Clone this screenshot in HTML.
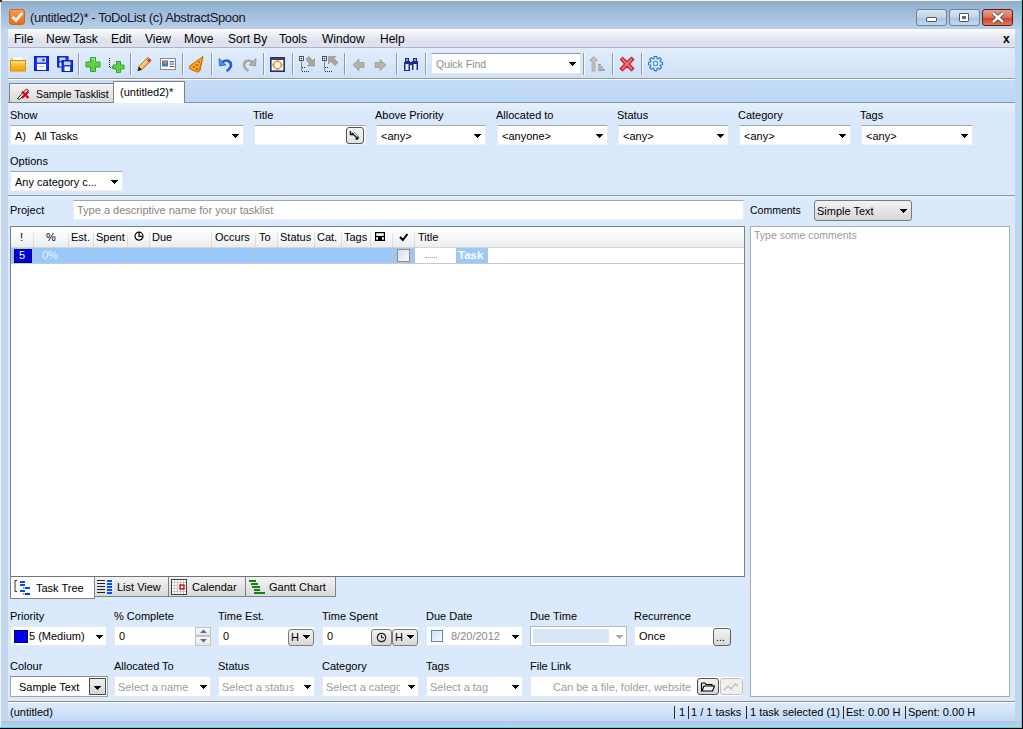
<!DOCTYPE html>
<html><head><meta charset="utf-8">
<style>
*{box-sizing:border-box;margin:0;padding:0}
html,body{width:1023px;height:729px;overflow:hidden;background:#fff}
body{font-family:"Liberation Sans",sans-serif;font-size:11px;color:#000;position:relative}
.a{position:absolute}
.t{position:absolute;white-space:nowrap;line-height:13px}
.combo{position:absolute;background:#fff;border:1px solid #e6ebf1;border-top-color:#a2a6ad;border-bottom-color:#edf2f8;height:20px}
.arr{position:absolute;width:7px;height:4px;background:linear-gradient(var(--c),var(--c)) 0 0/7px 1px no-repeat,linear-gradient(var(--c),var(--c)) 1px 1px/5px 1px no-repeat,linear-gradient(var(--c),var(--c)) 2px 2px/3px 1px no-repeat,linear-gradient(var(--c),var(--c)) 3px 3px/1px 1px no-repeat;--c:#000}
.combo .arr{right:4px;top:8px}
.lbl{position:absolute;white-space:nowrap;line-height:13px;color:#000}
.hd{position:absolute;top:231px;white-space:nowrap;line-height:13px}
.vs{position:absolute;width:1px;background:linear-gradient(#fff,#e2e2e2 40%,#d8d8d8)}
.rs{position:absolute;width:1px;background:#c2c2c2;top:248px;height:15px}
.tsep{position:absolute;top:53px;width:2px;height:22px;border-left:1px solid #8d9bb0;border-right:1px solid #f4f8fc}
.btn{position:absolute;border:1px solid #7a7a7a;border-radius:3px;background:linear-gradient(#f3f3f3,#e5e5e5 50%,#d6d6d6)}
.ssep{position:absolute;top:706px;width:1px;height:13px;background:#2a2a2a}
</style></head><body>
<!-- window frame -->
<div class="a" style="left:0;top:0;width:1023px;height:729px;background:#c3d6ee"></div>
<div class="a" style="left:0;top:0;width:1px;height:729px;background:#eef3f9"></div>
<div class="a" style="left:0;top:0;width:1023px;height:1px;background:#eef3f9"></div>
<div class="a" style="left:1px;top:1px;width:1020px;height:28px;background:linear-gradient(#8fa7c6,#94b2c6 3px,#98b6d6 7px,#a6c1de 15px,#b6cee9 27px)"></div>
<div class="a" style="left:0;top:0;width:2px;height:2px;background:#2a3040"></div>
<div class="a" style="left:1021px;top:0;width:1px;height:728px;background:#3fd8f8"></div>
<div class="a" style="left:1022px;top:0;width:1px;height:729px;background:#000"></div>
<div class="a" style="left:0;top:727px;width:1022px;height:1px;background:#3fd8f8"></div>
<div class="a" style="left:0;top:728px;width:1023px;height:1px;background:#000"></div>
<!-- title -->
<div class="a" style="left:9px;top:9px;width:16px;height:16px;background:linear-gradient(#fa9a50,#ea6a18);border-radius:3px;border:1px solid #d0651c"></div>
<svg class="a" style="left:9px;top:9px" width="16" height="16"><path d="M3.5 8 L7 11.5 L13 4" stroke="#fff" stroke-width="2.6" fill="none"/></svg>
<div class="t" style="left:30px;top:11px;font-size:13px;letter-spacing:-0.4px;color:#15152a">(untitled2)* - ToDoList (c) AbstractSpoon</div>
<!-- window buttons -->
<div class="a" style="left:916px;top:9px;width:31px;height:17px;border:1px solid #6f7f94;border-radius:3px;background:linear-gradient(#d8e5f3,#c0d3ea 50%,#aac1dd 51%,#c6d9ee)"></div>
<div class="a" style="left:926px;top:17px;width:11px;height:5px;background:#fff;border:1px solid #505a68;border-radius:1px"></div>
<div class="a" style="left:949px;top:9px;width:31px;height:17px;border:1px solid #6f7f94;border-radius:3px;background:linear-gradient(#d8e5f3,#c0d3ea 50%,#aac1dd 51%,#c6d9ee)"></div>
<div class="a" style="left:959px;top:13px;width:10px;height:9px;background:#fff;border:1px solid #505a68;border-radius:1px"></div>
<div class="a" style="left:962px;top:16px;width:4px;height:3px;background:#5a6a80"></div>
<div class="a" style="left:982px;top:9px;width:31px;height:17px;border:1px solid #5a2020;border-radius:3px;background:linear-gradient(#e8a08a,#d97058 50%,#c8402a 51%,#e07a5a)"></div>
<svg class="a" style="left:990px;top:11px" width="16" height="13"><path d="M3 2 L13 11 M13 2 L3 11" stroke="#4a3a3a" stroke-width="4"/><path d="M3 2 L13 11 M13 2 L3 11" stroke="#fff" stroke-width="2.4"/></svg>

<!-- client bg -->
<div class="a" style="left:8px;top:29px;width:1007px;height:692px;background:#d9e7f8"></div><div class="a" style="left:1px;top:721px;width:1020px;height:6px;background:linear-gradient(#c4c8ea,#a9c9e7 20%,#bfc9e8 40%,#a9d3dc 60%,#c6c9ec 80%,#b0dcf0)"></div>
<!-- menu -->
<div class="a" style="left:8px;top:29px;width:1007px;height:19px;background:linear-gradient(#fefefe,#f3f3f7 4px,#e8eaf3 8px,#dde1ee 12px,#dfe2f0);border-bottom:1px solid #aeb3c3"></div>
<div class="t" style="left:14px;top:33px;font-size:12px">File</div>
<div class="t" style="left:46px;top:33px;font-size:12px">New Task</div>
<div class="t" style="left:111px;top:33px;font-size:12px">Edit</div>
<div class="t" style="left:145px;top:33px;font-size:12px">View</div>
<div class="t" style="left:184px;top:33px;font-size:12px">Move</div>
<div class="t" style="left:228px;top:33px;font-size:12px">Sort By</div>
<div class="t" style="left:279px;top:33px;font-size:12px">Tools</div>
<div class="t" style="left:322px;top:33px;font-size:12px">Window</div>
<div class="t" style="left:380px;top:33px;font-size:12px">Help</div>
<div class="t" style="left:1003px;top:33px;font-size:12px;font-weight:bold">x</div>

<!-- toolbar -->
<div class="a" style="left:8px;top:48px;width:1007px;height:32px;background:linear-gradient(#e2edfb,#d6e6f9 60%,#cfe1f7 97%);border-bottom:1px solid #fff"></div><div class="a" style="left:8px;top:78px;width:1007px;height:1px;background:#8f9aa8"></div>
<svg class="a" style="left:10px;top:56px" width="16" height="16"><defs><linearGradient id="gf" x1="0" y1="0" x2="0" y2="1"><stop offset="0" stop-color="#ffd35a"/><stop offset="1" stop-color="#f0a010"/></linearGradient></defs><path d="M1 2.5 H6 L7 4 H14 V15 H1 Z" fill="#f5b23a"/><rect x="3" y="1" width="10" height="4" fill="#fff" stroke="#ddd" stroke-width="0.5"/><rect x="0.5" y="4.5" width="15" height="10.5" fill="url(#gf)" stroke="#e8880a" stroke-width="1"/><rect x="1.5" y="6" width="13" height="1" fill="#ffe79a"/></svg>
<svg class="a" style="left:34px;top:56px" width="15" height="15"><rect x="0.8" y="0.8" width="13.4" height="13.4" fill="#1a3cf0" stroke="#0a20d0" stroke-width="1.6"/><rect x="3" y="1.5" width="9" height="5" fill="#c8d2e8"/><circle cx="9.5" cy="4" r="1.3" fill="#1a3ca0"/><rect x="3" y="8" width="9" height="6" fill="#fafafa"/><rect x="5" y="10" width="5" height="1" fill="#c0c0c0"/></svg>
<svg class="a" style="left:57px;top:56px" width="16" height="16"><rect x="0.8" y="0.8" width="10" height="10" fill="#1a3cf0" stroke="#0a20d0" stroke-width="1.5"/><rect x="2.5" y="1.5" width="6" height="3.5" fill="#c8d2e8"/><rect x="2.5" y="6.5" width="5" height="4" fill="#fafafa"/><rect x="5.3" y="4.8" width="10" height="10.5" fill="#1a3cf0" stroke="#0a20d0" stroke-width="1.5"/><rect x="7" y="5.5" width="6.5" height="3.5" fill="#c8d2e8"/><rect x="7.5" y="10.5" width="5.5" height="4.5" fill="#fafafa"/></svg>
<svg class="a" style="left:85px;top:57px" width="16" height="15"><path d="M5.5 0.5 h5 v4.5 h4.5 v5 h-4.5 v4.5 h-5 v-4.5 h-4.5 v-5 h4.5 z" fill="#62cf4a" stroke="#33a52a" stroke-width="1"/><path d="M6.5 1.5 h3 v4" stroke="#a8ee98" stroke-width="1" fill="none"/></svg>
<svg class="a" style="left:108px;top:57px" width="18" height="16"><path d="M1.5 1 V10" stroke="#202020" stroke-width="1" stroke-dasharray="1 1"/><path d="M2 10.5 H5" stroke="#202020" stroke-width="1" stroke-dasharray="1 1"/><path d="M8.5 4.5 h4 v3.5 h3.5 v4 h-3.5 v3.5 h-4 v-3.5 h-3.5 v-4 h3.5 z" fill="#62cf4a" stroke="#33a52a" stroke-width="1"/></svg>
<svg class="a" style="left:136px;top:56px" width="17" height="16"><path d="M2 14.5 L3 10.5 L12 1.5 L15 4.5 L6 13.5 Z" fill="#f7c640" stroke="#a05a10" stroke-width="1"/><path d="M11 2.5 L14 5.5" stroke="#e03050" stroke-width="2.5"/><path d="M1.5 15 L3 10.8 L5.7 13.5 Z" fill="#202020"/><path d="M4 11 L12.5 2.5" stroke="#fff3b0" stroke-width="1"/></svg>
<svg class="a" style="left:160px;top:58px" width="16" height="13"><rect x="0.5" y="0.5" width="15" height="11" fill="#fff" stroke="#8a8a8a" stroke-width="1"/><rect x="2" y="2.5" width="6" height="6" fill="#2f7be0"/><circle cx="5" cy="4.5" r="1.8" fill="#e08020"/><rect x="9.5" y="3" width="5" height="1.3" fill="#2f7be0"/><rect x="9.5" y="5.5" width="5" height="1.1" fill="#606060"/><rect x="9.5" y="8" width="5" height="1.1" fill="#606060"/></svg>
<svg class="a" style="left:188px;top:56px" width="17" height="17"><path d="M15 0.5 L3 9 Q0.5 11 2 13 L9 16 Q11 16.5 12 14.5 Z" fill="#f6a720" stroke="#c86008" stroke-width="1"/><path d="M15 0.5 L12 14.5 L10 15" fill="#e87010"/><circle cx="6" cy="11" r="1" fill="#b05a10"/><circle cx="9" cy="9" r="1" fill="#b05a10"/><circle cx="9" cy="13" r="1" fill="#b05a10"/><circle cx="11" cy="6" r="0.9" fill="#b05a10"/></svg>
<svg class="a" style="left:218px;top:57px" width="16" height="15"><path d="M3.5 6 Q7 2.5 10.5 4 Q14 6 12.5 10 Q11 13 8.5 14" fill="none" stroke="#1f5fd0" stroke-width="2.6"/><path d="M1 1.5 L1.5 9 L8 8 Z" fill="#4a90e8" stroke="#1f5fd0" stroke-width="0.8"/></svg>
<svg class="a" style="left:241px;top:57px" width="16" height="15"><path d="M12.5 6 Q9 2.5 5.5 4 Q2 6 3.5 10 Q5 13 7.5 14" fill="none" stroke="#a8a8a4" stroke-width="2.6"/><path d="M15 1.5 L14.5 9 L8 8 Z" fill="#b0b0ac" stroke="#909090" stroke-width="0.8"/></svg>
<svg class="a" style="left:270px;top:57px" width="15" height="15"><rect x="0.8" y="0.8" width="13.4" height="13.4" fill="#fbfbff" stroke="#2a2f6a" stroke-width="1.6"/><rect x="1" y="1" width="13" height="2" fill="#3a4080"/><circle cx="7.5" cy="8" r="3.8" fill="none" stroke="#f0a020" stroke-width="1.6"/><path d="M2.5 6.5 L4.5 8 L2.5 9.5 Z M12.5 6.5 L10.5 8 L12.5 9.5 Z M6 3.5 L7.5 5 L9 3.5Z M6 12.5 L7.5 11 L9 12.5 Z" fill="#e08a10"/></svg>
<svg class="a" style="left:299px;top:56px" width="17" height="17"><rect x="0.5" y="0.5" width="4" height="4" fill="#fff" stroke="#404040" stroke-width="0.9"/><path d="M1.5 2.5 H3.5 M2.5 1.5 V3.5" stroke="#404040" stroke-width="0.8"/><path d="M2.5 5.5 V15" stroke="#303030" stroke-width="1" stroke-dasharray="1 1"/><path d="M3 11.5 H7 M3 15.5 H10" stroke="#303030" stroke-width="1" stroke-dasharray="1 1"/><path d="M7 3 L10 0.5 L13.5 4.5 L15.5 2.5 L15.5 10 L8.5 10 L10.5 8 Z" fill="#a9a59c" stroke="#8c8880" stroke-width="0.6"/></svg>
<svg class="a" style="left:322px;top:56px" width="17" height="17"><rect x="0.5" y="0.5" width="4" height="4" fill="#fff" stroke="#404040" stroke-width="0.9"/><path d="M1.5 2.5 H3.5 M2.5 1.5 V3.5" stroke="#404040" stroke-width="0.8"/><path d="M2.5 5.5 V15" stroke="#303030" stroke-width="1" stroke-dasharray="1 1"/><path d="M3 11.5 H7 M3 15.5 H10" stroke="#303030" stroke-width="1" stroke-dasharray="1 1"/><path d="M6.5 0.5 L14 0.5 L12 2.5 L16 6.5 L13 9.5 L9 5.5 L6.5 8 Z" fill="#a9a59c" stroke="#8c8880" stroke-width="0.6"/></svg>
<svg class="a" style="left:352px;top:58px" width="13" height="14"><path d="M1 7 L7 1 L7 4.5 L12 4.5 L12 9.5 L7 9.5 L7 13 Z" fill="#b6b2a8" stroke="#9a968c" stroke-width="0.7"/></svg>
<svg class="a" style="left:374px;top:58px" width="13" height="14"><path d="M12 7 L6 1.5 L6 4.5 L1 4.5 L1 9.5 L6 9.5 L6 12.5 Z" fill="#b6b2a8" stroke="#9a968c" stroke-width="0.7"/></svg>
<svg class="a" style="left:403px;top:57px" width="16" height="15"><path d="M2 1 h4 v3 h1 v10 h-6 v-9 h1 z M10 1 h4 v3 h1 v9 h-6 v-9 h1z" fill="#1a2c90"/><rect x="2.5" y="7" width="3" height="6" fill="#e8ecf8"/><rect x="10.5" y="7" width="3" height="6" fill="#e8ecf8"/><rect x="7" y="5" width="2" height="3" fill="#1a2c90"/><rect x="3" y="2" width="2" height="2" fill="#8aa0e0"/><rect x="11" y="2" width="2" height="2" fill="#8aa0e0"/></svg>
<svg class="a" style="left:589px;top:56px" width="17" height="16"><path d="M4.5 0.5 L8.5 4.5 H6 V15 H3 V4.5 H0.5 Z" fill="#c8c4ba" stroke="#a09c94" stroke-width="0.8"/><rect x="9" y="8" width="3" height="2" fill="#a8a49a"/><rect x="9" y="10.5" width="5" height="2" fill="#a8a49a"/><rect x="9" y="13" width="7" height="2" fill="#a8a49a"/></svg>
<svg class="a" style="left:619px;top:56px" width="16" height="16"><path d="M1.5 3.5 L3.5 1.2 L8 5.7 L12.5 1.2 L14.8 3.5 L10.3 8 L14.8 12.5 L12.5 14.8 L8 10.3 L3.5 14.8 L1.2 12.5 L5.7 8 Z" fill="#f0707a" stroke="#c8101e" stroke-width="1.1"/></svg>
<svg class="a" style="left:648px;top:56px" width="16" height="16"><path d="M5.98 2.53 L6.25 0.41 L8.75 0.41 L9.02 2.53 L9.94 2.91 L11.63 1.60 L13.40 3.37 L12.09 5.06 L12.47 5.98 L14.59 6.25 L14.59 8.75 L12.47 9.02 L12.09 9.94 L13.40 11.63 L11.63 13.40 L9.94 12.09 L9.02 12.47 L8.75 14.59 L6.25 14.59 L5.98 12.47 L5.06 12.09 L3.37 13.40 L1.60 11.63 L2.91 9.94 L2.53 9.02 L0.41 8.75 L0.41 6.25 L2.53 5.98 L2.91 5.06 L1.60 3.37 L3.37 1.60 L5.06 2.91 Z" fill="#cfe6fb" stroke="#1b78d6" stroke-width="1.1" stroke-linejoin="round"/><circle cx="7.5" cy="7.5" r="2.2" fill="#eef6fd" stroke="#2a6fb8" stroke-width="1"/></svg>
<div class="tsep" style="left:78px"></div>
<div class="tsep" style="left:130px"></div>
<div class="tsep" style="left:182px"></div>
<div class="tsep" style="left:211px"></div>
<div class="tsep" style="left:263px"></div>
<div class="tsep" style="left:292px"></div>
<div class="tsep" style="left:344px"></div>
<div class="tsep" style="left:396px"></div>
<div class="tsep" style="left:425px"></div>
<div class="tsep" style="left:583px"></div>
<div class="tsep" style="left:612px"></div>
<div class="tsep" style="left:641px"></div>
<div class="a" style="left:431px;top:53px;width:150px;height:21px;background:#fff;border:1px solid #dfe6ef;border-top-color:#8d99aa"></div>
<div class="t" style="left:436px;top:58px;color:#8e8e8e;font-size:10.5px">Quick Find</div>
<i class="arr" style="left:569px;top:62px"></i>

<!-- tabs row -->
<div class="a" style="left:8px;top:80px;width:1007px;height:23px;background:linear-gradient(#c6ddf8,#bbd6f6);border-bottom:1px solid #8a96a4"></div>
<div class="a" style="left:9px;top:83px;width:105px;height:20px;background:linear-gradient(#f4f4f4,#e6e6e6 50%,#dadada);border:1px solid #7d828a"></div>
<div class="t" style="left:36px;top:88px;font-size:10.5px">Sample Tasklist</div>
<div class="a" style="left:113px;top:81px;width:72px;height:23px;background:#fff;border:1px solid #7d828a;border-bottom:none"></div>
<div class="t" style="left:120px;top:86px">(untitled2)*</div>

<!-- filter panel -->
<div class="a" style="left:8px;top:103px;width:1007px;height:93px;background:linear-gradient(#e6f0fc,#d9e8fb 12px);border-bottom:1px solid #8e99a6"></div>
<div class="lbl" style="left:10px;top:109px">Show</div>
<div class="combo" style="left:10px;top:125px;width:234px"><span class="t" style="left:4px;top:4px">A)&nbsp;&nbsp; All Tasks</span><i class="arr"></i></div>
<div class="lbl" style="left:253px;top:109px">Title</div>
<div class="combo" style="left:254px;top:125px;width:112px"></div>
<div class="btn" style="left:346px;top:127px;width:18px;height:17px;border-color:#555;border-radius:3px;background:linear-gradient(#f4f4f4,#e2e2e2)"></div><svg class="a" style="left:349px;top:130px" width="12" height="11"><path d="M1.5 1 V4.5 H5 M3 3 L9 9 M9 9 L6.5 9 M9 9 L9 6.5" stroke="#111" stroke-width="1.4" fill="none"/><path d="M5 2 L9 6" stroke="#3aa" stroke-width="1"/></svg>
<div class="lbl" style="left:375px;top:109px">Above Priority</div>
<div class="combo" style="left:376px;top:125px;width:110px"><span class="t" style="left:4px;top:4px">&lt;any&gt;</span><i class="arr"></i></div>
<div class="lbl" style="left:496px;top:109px">Allocated to</div>
<div class="combo" style="left:497px;top:125px;width:111px"><span class="t" style="left:4px;top:4px">&lt;anyone&gt;</span><i class="arr"></i></div>
<div class="lbl" style="left:617px;top:109px">Status</div>
<div class="combo" style="left:618px;top:125px;width:111px"><span class="t" style="left:4px;top:4px">&lt;any&gt;</span><i class="arr"></i></div>
<div class="lbl" style="left:738px;top:109px">Category</div>
<div class="combo" style="left:739px;top:125px;width:112px"><span class="t" style="left:4px;top:4px">&lt;any&gt;</span><i class="arr"></i></div>
<div class="lbl" style="left:860px;top:109px">Tags</div>
<div class="combo" style="left:861px;top:125px;width:112px"><span class="t" style="left:4px;top:4px">&lt;any&gt;</span><i class="arr"></i></div>
<div class="lbl" style="left:10px;top:155px">Options</div>
<div class="combo" style="left:10px;top:171px;width:113px"><span class="t" style="left:4px;top:4px">Any category c...</span><i class="arr"></i></div>

<!-- main area -->
<div class="a" style="left:8px;top:196px;width:1007px;height:505px;background:linear-gradient(#e6f0fc,#dae9fb 4px)"></div>
<div class="lbl" style="left:10px;top:204px">Project</div>
<div class="a" style="left:73px;top:200px;width:671px;height:20px;background:#fff;border:1px solid #e6ebf1;border-top-color:#a2a6ad;border-bottom-color:#edf2f8"></div>
<div class="t" style="left:77px;top:204px;color:#858585">Type a descriptive name for your tasklist</div>
<div class="lbl" style="left:750px;top:204px;font-size:10.5px">Comments</div>
<div class="btn" style="left:814px;top:200px;width:98px;height:21px;border-radius:3px"></div>
<div class="t" style="left:817px;top:205px">Simple Text</div>
<i class="arr" style="left:900px;top:209px"></i>

<!-- task list -->
<div class="a" style="left:10px;top:226px;width:735px;height:351px;background:#fff;border:1px solid #7a8088;border-bottom-color:#6e747c"></div>
<div class="a" style="left:11px;top:227px;width:733px;height:21px;background:linear-gradient(#fff,#f7f8f9 50%,#ebedef);border-bottom:1px solid #d5d5d5"></div>
<!-- row -->
<div class="a" style="left:11px;top:248px;width:403px;height:15px;background:#99c9f8"></div>
<div class="a" style="left:11px;top:263px;width:733px;height:1px;background:#c9c9c9"></div>
<div class="vs" style="left:33px;top:228px;height:19px"></div>
<div class="vs" style="left:68px;top:228px;height:19px"></div>
<div class="vs" style="left:93px;top:228px;height:19px"></div>
<div class="vs" style="left:127px;top:228px;height:19px"></div>
<div class="vs" style="left:149px;top:228px;height:19px"></div>
<div class="vs" style="left:211px;top:228px;height:19px"></div>
<div class="vs" style="left:255px;top:228px;height:19px"></div>
<div class="vs" style="left:277px;top:228px;height:19px"></div>
<div class="vs" style="left:314px;top:228px;height:19px"></div>
<div class="vs" style="left:341px;top:228px;height:19px"></div>
<div class="vs" style="left:370px;top:228px;height:19px"></div>
<div class="vs" style="left:392px;top:228px;height:19px"></div>
<div class="vs" style="left:414px;top:228px;height:19px"></div>
<div class="rs" style="left:33px"></div>
<div class="rs" style="left:68px"></div>
<div class="rs" style="left:93px"></div>
<div class="rs" style="left:127px"></div>
<div class="rs" style="left:149px"></div>
<div class="rs" style="left:211px"></div>
<div class="rs" style="left:255px"></div>
<div class="rs" style="left:277px"></div>
<div class="rs" style="left:314px"></div>
<div class="rs" style="left:341px"></div>
<div class="rs" style="left:370px"></div>
<div class="rs" style="left:392px"></div>
<div class="rs" style="left:414px"></div>
<div class="hd" style="left:20px">!</div>
<div class="hd" style="left:46px">%</div>
<div class="hd" style="left:71px">Est.</div>
<div class="hd" style="left:96px">Spent</div>
<div class="hd" style="left:152px">Due</div>
<div class="hd" style="left:215px">Occurs</div>
<div class="hd" style="left:259px">To</div>
<div class="hd" style="left:280px">Status</div>
<div class="hd" style="left:317px">Cat.</div>
<div class="hd" style="left:344px">Tags</div>
<div class="hd" style="left:418px">Title</div>
<svg class="a" style="left:134px;top:231px" width="11" height="11"><circle cx="5" cy="5.2" r="4" stroke="#000" stroke-width="1.2" fill="#fff"/><path d="M5 1.5 V5.3 H8.3" stroke="#000" stroke-width="1.2" fill="none"/></svg>
<svg class="a" style="left:375px;top:232px" width="10" height="9"><path d="M0.6 0.6 H9.4 V8.4 H0.6 Z" stroke="#000" stroke-width="1.2" fill="#fff"/><path d="M1 4.5 H9" stroke="#000" stroke-width="1.2"/><rect x="3" y="5" width="4" height="3" fill="#000"/></svg>
<svg class="a" style="left:399px;top:233px" width="10" height="9"><path d="M1 4 L3.8 7 L8.5 1" stroke="#000" stroke-width="2" fill="none"/></svg>
<div class="a" style="left:14px;top:249px;width:18px;height:14px;background:#0000d8;border:1px solid #00007a"></div>
<div class="t" style="left:19px;top:249px;color:#fff">5</div>
<div class="t" style="left:42px;top:249px;color:#e6f2ff">0%</div>
<div class="a" style="left:397px;top:249px;width:13px;height:13px;background:linear-gradient(135deg,#dcdcdc,#fbfbfb);border:1px solid #8f8f8f"></div>
<div class="a" style="left:425px;top:257px;width:12px;height:1px;border-top:1px dotted #a0a0a0"></div>
<div class="a" style="left:456px;top:248px;width:32px;height:15px;background:#99c9f8"></div>
<div class="t" style="left:458px;top:249px;color:#fff;font-weight:bold;font-size:11.5px">Task</div>


<!-- comments -->
<div class="a" style="left:750px;top:226px;width:260px;height:471px;background:#fff;border:1px solid #abadb3"></div>
<div class="t" style="left:754px;top:229px;color:#9a9a9a;font-size:10.5px">Type some comments</div>

<!-- view tabs -->
<div class="a" style="left:10px;top:577px;width:85px;height:22px;background:#fff;border:1px solid #7d828a;border-top:none"></div>
<div class="t" style="left:36px;top:582px">Task Tree</div>
<div class="a" style="left:94px;top:577px;width:75px;height:20px;background:linear-gradient(#f4f4f4,#e6e6e6 50%,#dadada);border:1px solid #7d828a;border-top:none"></div>
<div class="t" style="left:117px;top:581px">List View</div>
<div class="a" style="left:168px;top:577px;width:78px;height:20px;background:linear-gradient(#f4f4f4,#e6e6e6 50%,#dadada);border:1px solid #7d828a;border-top:none"></div>
<div class="t" style="left:192px;top:581px">Calendar</div>
<div class="a" style="left:245px;top:577px;width:91px;height:20px;background:linear-gradient(#f4f4f4,#e6e6e6 50%,#dadada);border:1px solid #7d828a;border-top:none"></div>
<div class="t" style="left:269px;top:581px">Gantt Chart</div>

<!-- attributes -->
<div class="lbl" style="left:10px;top:610px">Priority</div>
<div class="combo" style="left:10px;top:626px;width:97px;height:20px;border-color:#e3e9ef"></div>
<div class="a" style="left:14px;top:630px;width:14px;height:13px;background:#0000f0;border:1px solid #00008a"></div>
<div class="t" style="left:29px;top:630px;">5 (Medium)</div>
<i class="arr" style="left:96px;top:635px"></i>
<div class="lbl" style="left:114px;top:610px">% Complete</div>
<div class="combo" style="left:114px;top:626px;width:97px;height:20px;border-color:#e3e9ef"></div>
<div class="t" style="left:119px;top:630px;">0</div>
<div class="a" style="left:195px;top:627px;width:16px;height:9px;background:linear-gradient(#fafafa,#e6e6e6);border:1px solid #c4c4c4"></div>
<div class="a" style="left:195px;top:636px;width:16px;height:10px;background:linear-gradient(#fafafa,#e6e6e6);border:1px solid #c4c4c4"></div>
<svg class="a" style="left:200px;top:629px" width="7" height="4"><path d="M0 4 L3.5 0.5 L7 4Z" fill="#5a6f98"/></svg>
<svg class="a" style="left:200px;top:639px" width="7" height="4"><path d="M0 0 L3.5 3.5 L7 0Z" fill="#5a6f98"/></svg>
<div class="lbl" style="left:218px;top:610px">Time Est.</div>
<div class="combo" style="left:218px;top:626px;width:97px;height:20px;border-color:#e3e9ef"></div>
<div class="t" style="left:223px;top:630px;">0</div>
<div class="btn" style="left:288px;top:629px;width:26px;height:17px;"></div>
<div class="t" style="left:291px;top:631px;">H</div>
<i class="arr" style="left:303px;top:635px"></i>
<div class="lbl" style="left:322px;top:610px">Time Spent</div>
<div class="combo" style="left:322px;top:626px;width:97px;height:20px;border-color:#e3e9ef"></div>
<div class="t" style="left:327px;top:630px;">0</div>
<div class="btn" style="left:371px;top:629px;width:21px;height:17px;"></div>
<svg class="a" style="left:376px;top:632px" width="11" height="11"><circle cx="5.5" cy="5.5" r="4.2" stroke="#222" stroke-width="1.2" fill="none"/><path d="M5.5 3 V5.8 H8" stroke="#222" stroke-width="1.1" fill="none"/></svg>
<div class="btn" style="left:392px;top:629px;width:26px;height:17px;"></div>
<div class="t" style="left:395px;top:631px;">H</div>
<i class="arr" style="left:407px;top:635px"></i>
<div class="lbl" style="left:426px;top:610px">Due Date</div>
<div class="combo" style="left:426px;top:626px;width:97px;height:20px;border-color:#e3e9ef"></div>
<div class="a" style="left:431px;top:630px;width:12px;height:12px;background:linear-gradient(135deg,#cfe3f5,#f4f9fd);border:1px solid #5d87b3"></div>
<div class="t" style="left:451px;top:630px;color:#8a8a8a">8/20/2012</div>
<i class="arr" style="left:512px;top:635px"></i>
<div class="lbl" style="left:530px;top:610px">Due Time</div>
<div class="combo" style="left:530px;top:626px;width:97px;height:20px;border-color:#b5b9be;background:#fff"></div>
<div class="a" style="left:533px;top:629px;width:76px;height:14px;background:#d7e7f9"></div>
<i class="arr" style="left:616px;top:635px;--c:#a8a8a8"></i>
<div class="lbl" style="left:634px;top:610px">Recurrence</div>
<div class="combo" style="left:634px;top:626px;width:97px;height:20px;border-color:#e3e9ef"></div>
<div class="t" style="left:639px;top:630px;">Once</div>
<div class="btn" style="left:713px;top:628px;width:18px;height:18px;border-color:#606060"></div>
<div class="t" style="left:716px;top:631px;">...</div>
<div class="lbl" style="left:10px;top:660px">Colour</div>
<div class="combo" style="left:10px;top:676px;width:98px;height:21px;border:1px solid #a4a4a4;border-top-color:#8a8a8a"></div>
<div class="t" style="left:19px;top:681px;">Sample Text</div>
<div class="a" style="left:89px;top:678px;width:17px;height:17px;background:linear-gradient(#f0f0f0,#d6d6d6);border:1px solid #4a4a4a"></div>
<i class="arr" style="left:94px;top:686px"></i>
<div class="lbl" style="left:114px;top:660px">Allocated To</div>
<div class="combo" style="left:114px;top:676px;width:97px;height:21px;border-color:#e3e9ef"></div>
<div class="t" style="left:118px;top:681px;color:#9d9d9d">Select a name</div>
<i class="arr" style="left:200px;top:685px"></i>
<div class="lbl" style="left:218px;top:660px">Status</div>
<div class="combo" style="left:218px;top:676px;width:97px;height:21px;border-color:#e3e9ef"></div>
<div class="t" style="left:222px;top:681px;color:#9d9d9d">Select a status</div>
<i class="arr" style="left:304px;top:685px"></i>
<div class="lbl" style="left:322px;top:660px">Category</div>
<div class="combo" style="left:322px;top:676px;width:97px;height:21px;border-color:#e3e9ef"></div>
<div class="a" style="left:326px;top:678px;width:74px;height:17px;overflow:hidden"><div class="t" style="left:0;top:3px;color:#9d9d9d">Select a category</div></div>
<i class="arr" style="left:408px;top:685px"></i>
<div class="lbl" style="left:426px;top:660px">Tags</div>
<div class="combo" style="left:426px;top:676px;width:97px;height:21px;border-color:#e3e9ef"></div>
<div class="t" style="left:430px;top:681px;color:#9d9d9d">Select a tag</div>
<i class="arr" style="left:512px;top:685px"></i>
<div class="lbl" style="left:530px;top:660px">File Link</div>
<div class="combo" style="left:530px;top:676px;width:214px;height:21px;border-color:#e3e9ef"></div>
<div class="t" style="left:553px;top:681px;color:#9d9d9d">Can be a file, folder, website</div>
<div class="btn" style="left:697px;top:678px;width:22px;height:17px;border-color:#505050"></div>
<svg class="a" style="left:700px;top:680px" width="16" height="13"><path d="M1.5 3 H5 L6 4.5 H12 V6 M1.5 3 V11 H12.5 L14.5 6 H4 L2 11" fill="#f0f0f0" stroke="#000" stroke-width="1.1"/></svg>
<div class="btn" style="left:720px;top:678px;width:23px;height:17px;border-color:#c0c0c0;background:#f0f0f0"></div>
<svg class="a" style="left:723px;top:681px" width="17" height="11"><path d="M1 9 L5 5 L8 8 L12 3 L15 5" fill="none" stroke="#b8b8b8" stroke-width="1.2"/></svg>

<!-- status bar -->
<div class="a" style="left:8px;top:701px;width:1007px;height:20px;background:linear-gradient(#dfeafa,#cfe2f9 60%,#bcd9f7);border-top:1px solid #8e8a92;box-shadow:inset 0 1px 0 #fff"></div>
<div class="t" style="left:10px;top:706px">(untitled)</div>
<div class="ssep" style="left:674px"></div>
<div class="t" style="left:679px;top:706px">1</div>
<div class="ssep" style="left:688px"></div>
<div class="t" style="left:691px;top:706px">1 / 1 tasks</div>
<div class="ssep" style="left:746px"></div>
<div class="t" style="left:750px;top:706px">1 task selected (1)</div>
<div class="ssep" style="left:843px"></div>
<div class="t" style="left:846px;top:706px">Est: 0.00 H</div>
<div class="ssep" style="left:905px"></div>
<div class="t" style="left:908px;top:706px">Spent: 0.00 H</div>
<svg class="a" style="left:16px;top:87px" width="15" height="13"><path d="M1.5 11.5 L10.5 2 L12.5 3.5 L3.5 12.5 Z" fill="#d8f0f0" stroke="#202020" stroke-width="1"/><path d="M6 4.5 L12.5 11 M12.5 4.5 L6 11" stroke="#e00010" stroke-width="2.2"/></svg>
<svg class="a" style="left:14px;top:580px" width="17" height="16"><path d="M3 0.5 H1 V11.5 H3" stroke="#303030" stroke-width="1" fill="none"/><rect x="6" y="1" width="5" height="2" fill="#0050f0"/><rect x="6" y="4" width="5" height="2" fill="#0050f0"/><rect x="11" y="7" width="5" height="2" fill="#0040f0"/><rect x="6" y="10" width="5" height="2" fill="#0050f0"/><rect x="11" y="13" width="5" height="2" fill="#0030f0"/><rect x="9" y="7.5" width="1.5" height="1" fill="#303030"/><rect x="9" y="13.5" width="1.5" height="1" fill="#303030"/></svg>
<svg class="a" style="left:97px;top:579px" width="16" height="16" shape-rendering="crispEdges"><rect x="0" y="1" width="8" height="1" fill="#202020"/><rect x="10" y="1" width="5" height="2" fill="#0050f0"/><rect x="0" y="4" width="8" height="1" fill="#202020"/><rect x="10" y="4" width="5" height="2" fill="#0050f0"/><rect x="0" y="7" width="8" height="1" fill="#202020"/><rect x="10" y="7" width="5" height="2" fill="#0050f0"/><rect x="0" y="10" width="8" height="1" fill="#202020"/><rect x="10" y="10" width="5" height="2" fill="#0050f0"/><rect x="0" y="13" width="8" height="1" fill="#202020"/><rect x="10" y="13" width="5" height="2" fill="#0050f0"/></svg>
<svg class="a" style="left:171px;top:579px" width="16" height="16"><rect x="0.5" y="0.5" width="15" height="15" fill="#fff" stroke="#404040" stroke-width="1"/><path d="M3.5 1 V15 M1 3.5 H15" stroke="#c8c8c8" stroke-width="1"/><path d="M6.5 1 V15 M1 6.5 H15" stroke="#c8c8c8" stroke-width="1"/><path d="M9.5 1 V15 M1 9.5 H15" stroke="#c8c8c8" stroke-width="1"/><path d="M12.5 1 V15 M1 12.5 H15" stroke="#c8c8c8" stroke-width="1"/><rect x="9" y="6" width="4" height="4" fill="none" stroke="#d00000" stroke-width="1.3"/></svg>
<svg class="a" style="left:249px;top:580px" width="16" height="15"><rect x="0" y="0" width="7" height="2" fill="#108010"/><rect x="2" y="3" width="7" height="2" fill="#108010"/><rect x="3" y="6" width="8" height="2" fill="#108010"/><rect x="5" y="9" width="6" height="2" fill="#108010"/><rect x="5" y="12" width="11" height="2" fill="#108010"/></svg>
</body></html>
